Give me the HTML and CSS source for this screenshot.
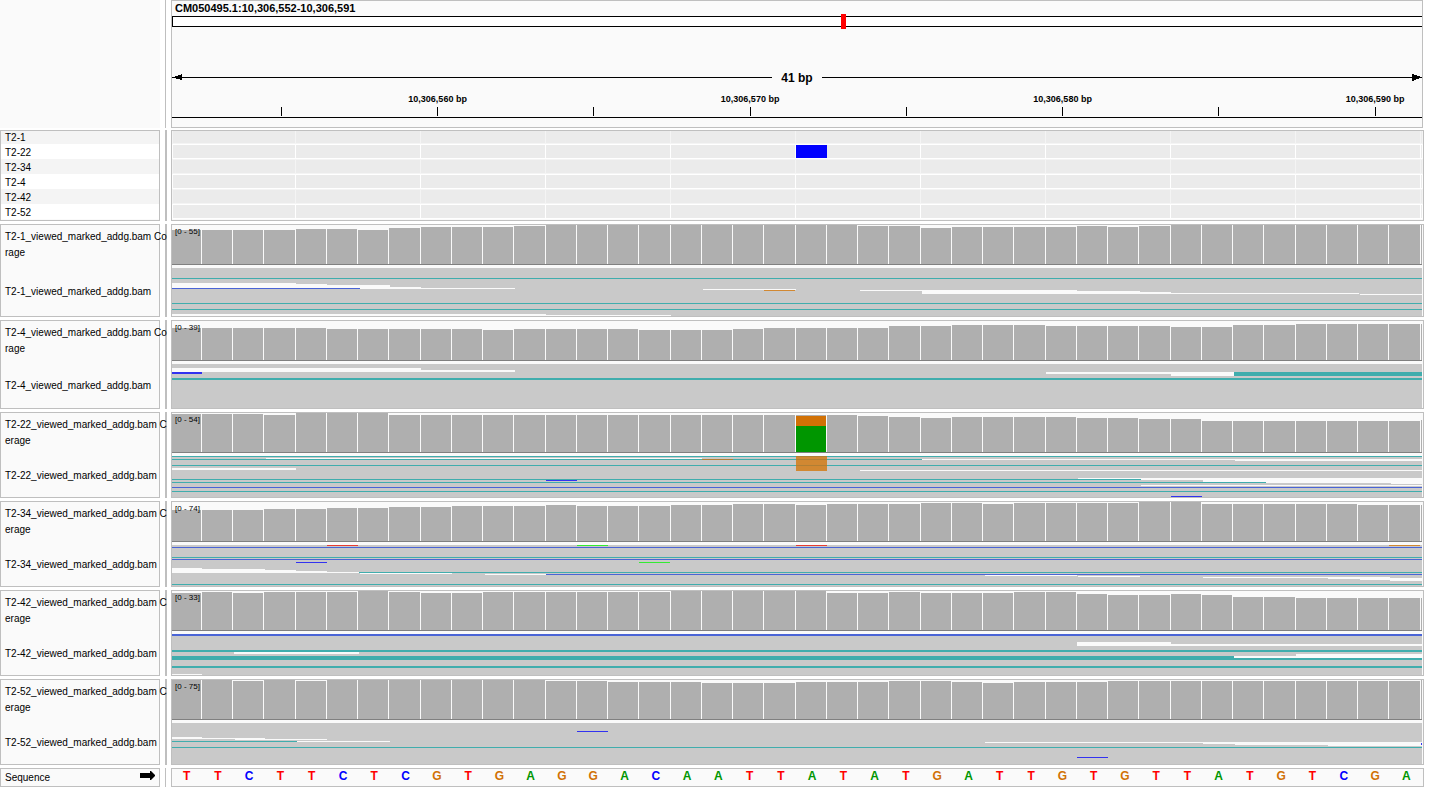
FILE: index.html
```html
<!DOCTYPE html>
<html lang="en">
<head>
<meta charset="utf-8">
<title>CM050495.1:10,306,552-10,306,591</title>
<link rel="stylesheet" href="styles.css">
</head>
<body>
<main class="browser">
  <section class="row row-header">
    <div class="names names-blank"></div>
    <div class="splitter splitter-thin"></div>
    <div class="data header">
      <h1 class="locus">CM050495.1:10,306,552-10,306,591</h1>
      <div class="chromosome"><span class="chromosome-mark"></span></div>
      <div class="span">
        <svg class="arrow" viewBox="0 0 10 7" aria-hidden="true"><path d="M0 3h3V2h3V1h3V0h1v6H8V5H4V4H0z"/></svg>
        <span class="span-line"></span>
        <span class="span-text">41 bp</span>
        <span class="span-line"></span>
        <svg class="arrow" viewBox="0 0 10 7" aria-hidden="true"><path d="M10 3H8V2H5V1H2V0H0v7h2V6h2V5h3V4h3z"/></svg>
      </div>
      <div class="bases ruler" id="ruler"></div>
    </div>
  </section>

  <section class="row row-variants">
    <ul class="names samples">
      <li>T2-1</li><li>T2-22</li><li>T2-34</li><li>T2-4</li><li>T2-42</li><li>T2-52</li>
    </ul>
    <div class="splitter"></div>
    <div class="data"><svg class="plot" id="variants" aria-label="Variant calls"></svg></div>
  </section>

  <div class="tracks" id="tracks"></div>

  <section class="row row-sequence">
    <div class="names sequence-name">
      <span>Sequence</span>
      <svg class="strand" viewBox="0 0 15 9" aria-hidden="true"><path d="M0 2h10V0h1l4 4v1l-4 4h-1V7H0z"/></svg>
    </div>
    <div class="splitter splitter-thin"></div>
    <div class="data bases sequence" id="sequence"></div>
  </section>
</main>
<script src="script.js"></script>
</body>
</html>
```
FILE: styles.css
```css
* {
  box-sizing: border-box;
}

body {
  margin: 0;
  background: #fff;
  color: #000;
  font: 10px/16px "Liberation Sans", Arial, sans-serif;
}

.browser,
.tracks {
  display: flex;
  flex-direction: column;
  gap: 3px;
}

.browser {
  padding-right: 16px;
}

.row {
  display: grid;
  grid-template-columns: 160px 2px minmax(0, 1fr);
  column-gap: 5px;
  min-width: 600px;
}

.row-header {
  height: 128px;
  margin-bottom: -1px;
}

.row-variants {
  height: 91px;
}

.row-sequence {
  height: 19px;
}

.names {
  position: relative;
  z-index: 1;
  margin: 0;
  padding: 0;
  border: 1px solid #bfbfbf;
  background: #fafafa;
  white-space: nowrap;
}

.names-blank {
  border: 0;
}

.splitter {
  background: #bfbfbf;
}

.splitter-thin {
  width: 1px;
}

.data {
  position: relative;
  z-index: 2;
  margin-left: -1px;
  border: 1px solid #bfbfbf;
  background: #fafafa;
}

.header {
  display: flex;
  flex-direction: column;
  margin-right: 1px;
}

.locus {
  margin: 0;
  padding-left: 3px;
  font-size: 11px;
  font-weight: bold;
  line-height: 15px;
}

.chromosome {
  position: relative;
  height: 11px;
  border: 1px solid #000;
  border-right: 0;
  background: #fff;
}

.chromosome-mark {
  position: absolute;
  top: -3px;
  left: 53.5%;
  width: 5px;
  height: 15px;
  background: #f00;
}

.span {
  display: flex;
  align-items: center;
  margin-top: 43px;
  height: 15px;
}

.span-line {
  flex: 1;
  height: 1px;
  background: #000;
}

.span-text {
  width: 50px;
  font-size: 12px;
  font-weight: bold;
  text-align: center;
}

.arrow {
  width: 10px;
  height: 7px;
}

.bases {
  display: grid;
  grid-template-columns: repeat(40, minmax(0, 1fr));
}

.ruler {
  grid-template-rows: 12px 9px;
  row-gap: 2px;
  margin-top: 8px;
  padding-bottom: 1px;
  border-bottom: 1px solid #000;
}

.ruler-label {
  grid-row: 1;
  font-size: 9px;
  font-weight: bold;
  line-height: 12px;
  text-align: center;
  white-space: nowrap;
}

.ruler-tick {
  grid-row: 2;
  justify-self: center;
  width: 1px;
  background: #000;
}

.samples {
  display: flex;
  flex-direction: column;
  justify-content: flex-end;
  overflow: hidden;
  padding-bottom: 1px;
  list-style: none;
}

.samples li {
  flex: none;
  height: 15px;
  padding-top: 1px;
  padding-left: 4px;
  background: #fff;
}

.samples li:nth-child(odd) {
  background: #f4f4f4;
}

.track-names {
  display: grid;
  grid-template-rows: 42px 1fr;
  padding-left: 4px;
}

.coverage-name {
  padding-top: 4px;
}

.reads-name {
  align-self: center;
}

.plot {
  display: block;
  width: 100%;
  height: 100%;
}

.scale {
  position: absolute;
  top: 1px;
  left: 3px;
  font-size: 8px;
  line-height: 12px;
}

.sequence-name {
  display: flex;
  align-items: center;
  justify-content: space-between;
  padding: 0 4px;
}

.strand {
  width: 15px;
  height: 9px;
  margin-bottom: 4px;
}

.sequence {
  font-size: 12px;
  font-weight: bold;
  line-height: 15px;
  text-align: center;
}

.sequence span {
  padding-right: 2px;
}

.base-A { color: #009600; }
.base-C { color: #00f; }
.base-G { color: #d17105; }
.base-T { color: #f00; }
```
FILE: script.js
```js
const NS = 'http://www.w3.org/2000/svg';
const WIDTH = 1251;
const READS = 1250;
const C = {
  paper: '#fafafa', bar: '#afafaf', axis: '#808080', read: '#c9c9c9',
  teal: '#40adad', blue: '#4a64d6', b: '#3232f0', g: '#32eb32',
  r: '#e63c32', o: '#d18832', mix: '#b07f35', orange: '#d17105', green: '#009600'
};

const rect = (color, x, y, w, h) =>
  `<rect x="${x}" y="${y}" width="${w}" height="${h}" fill="${C[color] || color}"/>`;

function plot(svg, height, shapes) {
  svg.setAttribute('viewBox', `0 0 ${WIDTH} ${height}`);
  svg.setAttribute('preserveAspectRatio', 'none');
  svg.setAttribute('shape-rendering', 'crispEdges');
  svg.innerHTML = shapes.join('');
}

const fill = (value, count) => Array(count).fill(value);
const baseStart = i => Math.floor(i * 31.25 - 1);

/* Each mark is [color, x, y, width, height]; y is measured from the panel top. */
const tracks = [
  {
    name: 'T2-1', tail: ['Co', 'rage'], max: 55, height: 93,
    tops: [5, 5, 5, 5, 4, 4, 5, 3, 2, 2, 2, 1, ...fill(0, 10), 1, 1, 3, 2, 2, 2, 2, 1, 2, 1, ...fill(0, 9)],
    marks: [
      ['teal', 0, 53, READS, 1], ['paper', 0, 58, 124, 5], ['paper', 124, 59, 31, 4],
      ['paper', 155, 60, 63, 4], ['paper', 218, 62, 31, 2], ['paper', 188, 63, 155, 1],
      ['blue', 0, 63, 188, 1], ['paper', 531, 64, 93, 1], ['o', 592, 65, 31, 1],
      ['paper', 688, 65, 62, 1], ['paper', 750, 65, 155, 4], ['paper', 905, 66, 63, 3],
      ['paper', 968, 67, 31, 2], ['paper', 999, 68, 188, 1], ['paper', 1188, 69, 62, 1],
      ['teal', 0, 78, READS, 1], ['teal', 0, 84, READS, 1],
      ['paper', 0, 89, 374, 2], ['paper', 374, 90, 125, 1]
    ]
  },
  {
    name: 'T2-4', tail: ['Co', 'rage'], max: 39, height: 89,
    tops: [...fill(7, 5), ...fill(8, 5), 9, ...fill(8, 4), 9, 9, 9, 8, ...fill(7, 4), 5, 5, 4, 4, 4, ...fill(5, 4), 6, 6, 4, 4, ...fill(3, 5)],
    marks: [
      ['paper', 0, 47, 249, 4], ['paper', 249, 49, 94, 2], ['b', 0, 51, 30, 2],
      ['teal', 0, 57, READS, 2], ['paper', 874, 51, 125, 2], ['paper', 999, 51, 63, 4],
      ['teal', 1062, 51, 188, 4]
    ]
  },
  {
    name: 'T2-22', tail: ['C', 'erage'], max: 54, height: 86,
    tops: [1, 1, 1, 2, 0, 0, 0, ...fill(2, 15), 3, 4, 5, 4, 4, 4, 4, 5, 5, 6, 6, ...fill(8, 7), 7],
    marks: [
      ['orange', 624, 3, 30, 10], ['green', 624, 13, 30, 26],
      ['teal', 0, 43, READS, 1], ['paper', 94, 45, 436, 1], ['teal', 0, 46, 750, 1],
      ['mix', 530, 46, 31, 1], ['paper', 750, 46, 500, 1], ['paper', 1063, 46, 187, 2],
      ['teal', 0, 52, READS, 1], ['paper', 0, 55, 124, 2],
      ['o', 624, 43, 31, 15], ['mix', 624, 43, 31, 1], ['mix', 624, 46, 31, 1], ['mix', 624, 52, 31, 1],
      ['paper', 688, 57, 562, 1], ['paper', 906, 65, 344, 1], ['paper', 969, 65, 281, 2],
      ['paper', 1031, 65, 219, 4], ['paper', 1094, 65, 156, 5], ['paper', 1219, 65, 31, 6],
      ['teal', 0, 66, 969, 1], ['b', 374, 67, 31, 1], ['teal', 0, 69, 1094, 1],
      ['paper', 969, 72, 281, 1], ['blue', 0, 74, READS, 1], ['teal', 0, 78, READS, 1],
      ['b', 999, 83, 31, 1]
    ]
  },
  {
    name: 'T2-34', tail: ['C', 'erage'], max: 74, height: 86,
    tops: [8, 8, 8, 7, 7, 6, 6, 5, 5, 4, 4, 4, 3, 4, 4, 4, 3, 3, 2, 2, 3, 2, 2, 2, 1, 1, 2, 1, 1, 1, 1, 0, 0, ...fill(2, 5), 3, 3, 3],
    marks: [
      ['r', 155, 43, 31, 1], ['g', 405, 43, 31, 1], ['r', 624, 43, 31, 1], ['o', 1217, 43, 31, 1],
      ['blue', 0, 45, READS, 1], ['teal', 0, 55, READS, 1], ['blue', 0, 57, READS, 1],
      ['b', 124, 60, 31, 1], ['g', 467, 60, 31, 1],
      ['paper', 0, 66, 30, 5], ['paper', 30, 67, 63, 4], ['paper', 93, 68, 31, 3],
      ['paper', 124, 69, 31, 2], ['paper', 155, 70, 32, 1], ['teal', 187, 70, 1063, 1],
      ['paper', 188, 71, 92, 1], ['paper', 313, 72, 61, 1], ['blue', 374, 72, 876, 1],
      ['paper', 813, 73, 92, 1], ['paper', 906, 74, 62, 1], ['paper', 1031, 75, 125, 1],
      ['paper', 1156, 75, 32, 2], ['paper', 1188, 75, 30, 3], ['paper', 1218, 76, 32, 3],
      ['teal', 0, 82, READS, 1]
    ]
  },
  {
    name: 'T2-42', tail: ['C', 'erage'], max: 33, height: 86,
    tops: [2, 1, 2, 1, 1, 1, 0, 1, 2, 2, ...fill(1, 6), ...fill(0, 5), 2, 2, 1, 2, 2, 2, 1, 1, 3, 4, 4, 3, 4, 6, 6, ...fill(7, 5)],
    marks: [
      ['blue', 0, 43, READS, 2], ['paper', 905, 51, 94, 4], ['paper', 999, 53, 251, 2],
      ['teal', 0, 59, READS, 2], ['paper', 62, 61, 125, 2], ['teal', 0, 65, READS, 4],
      ['paper', 1062, 65, 188, 2], ['paper', 1124, 63, 126, 4], ['teal', 0, 75, READS, 2],
      ['paper', 0, 83, 30, 1]
    ]
  },
  {
    name: 'T2-52', tail: ['C', 'erage'], max: 75, height: 86,
    tops: [0, 0, 1, 0, 1, ...fill(0, 7), 1, 1, 2, 2, 2, 3, 3, 3, 2, 2, 2, 1, 1, 2, 3, 2, 2, 2, ...fill(1, 10), 0],
    marks: [
      ['b', 405, 51, 31, 1], ['paper', 0, 57, 30, 1], ['paper', 0, 58, 93, 1],
      ['paper', 63, 59, 92, 1], ['teal', 0, 61, 125, 1], ['paper', 125, 61, 93, 1],
      ['paper', 813, 62, 218, 1], ['paper', 1031, 62, 32, 2], ['paper', 1063, 62, 93, 3],
      ['paper', 1156, 62, 94, 4], ['b', 1249, 63, 1, 2], ['teal', 0, 67, READS, 1],
      ['b', 905, 77, 31, 1]
    ]
  }
];

for (const track of tracks) {
  const inner = track.height - 2;
  const row = document.createElement('section');
  row.className = 'row track';
  row.style.height = `${track.height}px`;
  row.innerHTML = `
    <div class="names track-names">
      <div class="coverage-name">${track.name}_viewed_marked_addg.bam ${track.tail[0]}<br>${track.tail[1]}</div>
      <div class="reads-name">${track.name}_viewed_marked_addg.bam</div>
    </div>
    <div class="splitter"></div>
    <div class="data">
      <svg class="plot" aria-label="${track.name} coverage and reads"></svg>
      <span class="scale">[0 - ${track.max}]</span>
    </div>`;
  const bars = track.tops.map((top, i) => {
    const x = Math.max(0, baseStart(i));
    const end = i === 40 ? READS : baseStart(i + 1) - 1;
    return rect('bar', x, top, end - x, 39 - top);
  });
  plot(row.querySelector('svg'), inner, [
    ...bars,
    rect('axis', 0, 39, READS, 1),
    rect('read', 0, 43, READS, inner - 43),
    ...track.marks.map(mark => rect(...mark))
  ]);
  document.getElementById('tracks').append(row);
}

const variantShapes = [];
for (let sample = 0; sample < 6; sample++) {
  const y = sample * 15 - 2;
  variantShapes.push(rect(sample % 2 ? '#ffffff' : '#f4f4f4', 0, y, WIDTH, 15));
  variantShapes.push(rect('#ebebeb', 1, y + 1, 122, 13));
  for (let x = 124; x < WIDTH; x += 125) {
    variantShapes.push(rect('#ebebeb', x, y + 1, Math.min(124, READS - x), 13));
  }
}
variantShapes.push(rect('#0000ff', 624, 14, 31, 13));
plot(document.getElementById('variants'), 89, variantShapes);

const ruler = document.getElementById('ruler');
for (let base = 4; base <= 39; base += 5) {
  const tick = document.createElement('span');
  tick.className = 'ruler-tick';
  tick.style.gridColumn = base;
  ruler.append(tick);
  if (base % 10 === 9) {
    const label = document.createElement('span');
    label.className = 'ruler-label';
    label.style.gridColumn = `${base - 1} / span 3`;
    label.textContent = `10,306,${551 + base} bp`;
    ruler.append(label);
  }
}

document.getElementById('sequence').innerHTML =
  [...'TTCTTCTCGTGAGGACAATTATATGATTGTGTTATGTCGA']
    .map(base => `<span class="base-${base}">${base}</span>`).join('');
```
